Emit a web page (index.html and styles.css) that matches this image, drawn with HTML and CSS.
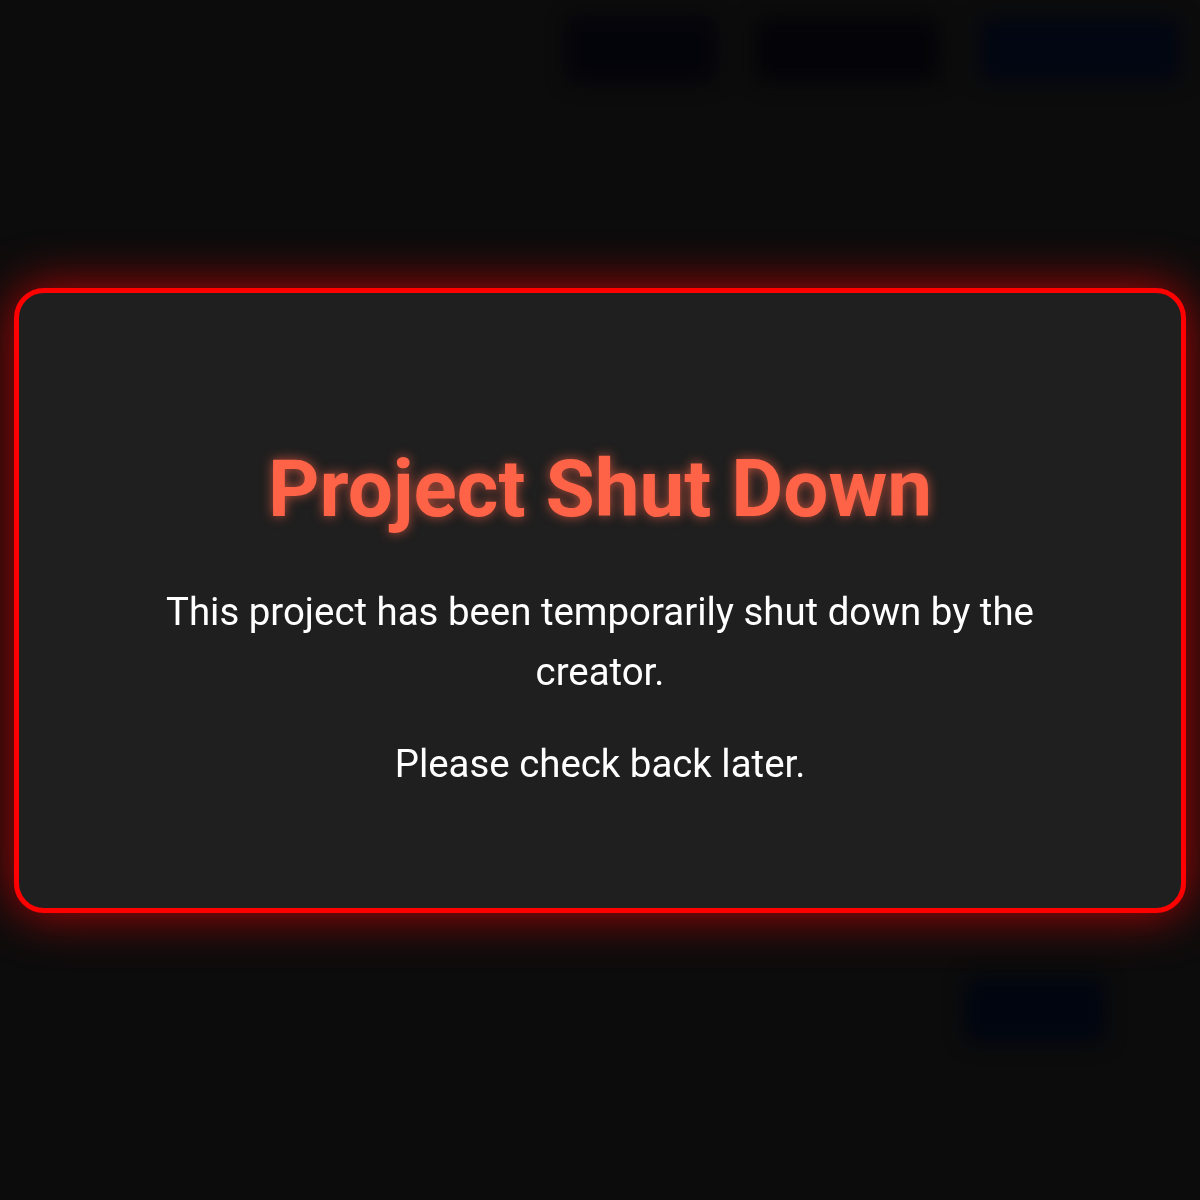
FILE: index.html
```html
<!DOCTYPE html>
<html lang="en">
<head>
<meta charset="utf-8">
<title>Project Shut Down</title>
<link rel="stylesheet" href="styles.css">
</head>
<body>
<div class="page">
  <header class="topbar">
    <div class="nav-btn nav-a"></div>
    <div class="nav-btn nav-b"></div>
    <div class="nav-btn nav-c"></div>
  </header>
  <main class="page-main"></main>
  <footer class="page-foot">
    <div class="foot-btn"></div>
  </footer>
</div>
<div class="overlay">
  <div class="modal">
    <h1 class="title">Project Shut Down</h1>
    <p class="msg">This project has been temporarily shut down by the creator.</p>
    <p class="msg">Please check back later.</p>
  </div>
</div>
</body>
</html>
```
FILE: styles.css
```css
html, body {
  margin: 0;
  padding: 0;
  height: 100%;
}
body {
  background: #0c0c0c;
  font-family: Roboto, "Liberation Sans", sans-serif;
  overflow: hidden;
}
.page {
  height: 1200px;
  display: flex;
  flex-direction: column;
  filter: blur(10px);
}
.topbar {
  display: flex;
  justify-content: flex-end;
  gap: 40px;
  padding: 18px 20px 0 0;
}
.nav-btn {
  height: 64px;
  border-radius: 8px;
}
.nav-a { width: 148px; background: #03030a; }
.nav-b { width: 185px; background: #040408; }
.nav-c { width: 200px; background: #010612; }
.page-main {
  flex: 1;
}
.page-foot {
  display: flex;
  justify-content: flex-end;
  padding: 0 95px 158px 0;
}
.foot-btn {
  width: 140px;
  height: 64px;
  border-radius: 8px;
  background: #000510;
}
.overlay {
  position: fixed;
  inset: 0;
  display: flex;
  align-items: center;
  justify-content: center;
  padding: 0 14px;
}
.modal {
  width: 100%;
  box-sizing: border-box;
  background: #1f1f1f;
  border: 5px solid #ff0000;
  border-radius: 30px;
  box-shadow: 0 0 50px rgba(255, 0, 0, 0.7);
  padding: 148px 140px 114px;
  text-align: center;
  color: #ffffff;
}
.title {
  margin: 0 0 45px;
  font-size: 80px;
  line-height: 96px;
  font-weight: 700;
  color: #ff6347;
  text-shadow: 0 0 12px rgba(255, 99, 71, 0.7);
}
.msg {
  margin: 0 0 32px;
  font-size: 38.4px;
  line-height: 60px;
}
.msg:last-child {
  margin-bottom: 0;
}
```
